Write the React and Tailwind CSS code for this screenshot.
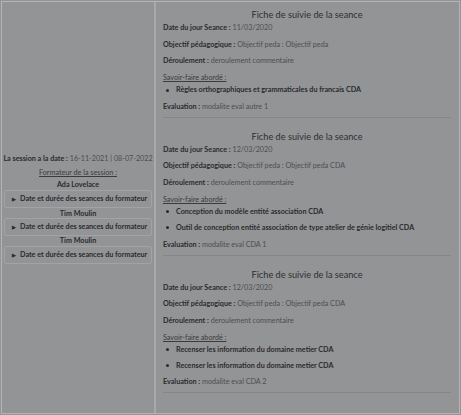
import React from "react";

const sections = [
  {
    date: "11/03/2020",
    obj: "Objectif peda : Objectif peda",
    skills: ["Règles orthographiques et grammaticales du francais CDA"],
    evalv: "modalite eval autre 1",
  },
  {
    date: "12/03/2020",
    obj: "Objectif peda : Objectif peda CDA",
    skills: [
      "Conception du modèle entité association CDA",
      "Outil de conception entité association de type atelier de génie logitiel CDA",
    ],
    evalv: "modalite eval CDA 1",
  },
  {
    date: "12/03/2020",
    obj: "Objectif peda : Objectif peda CDA",
    skills: [
      "Recenser les information du domaine metier CDA",
      "Recenser les information du domaine metier CDA",
    ],
    evalv: "modalite eval CDA 2",
  },
];

function Line({ label, value }) {
  return (
    <p className="leading-[10px] h-[10px] whitespace-nowrap">
      <span className="font-bold text-[#2a2b2d]">{label} :</span>{" "}
      <span className="text-[#4d4e50]">{value}</span>
    </p>
  );
}

function Section({ s }) {
  return (
    <div className="flex flex-col">
      <div className="text-center text-[9.2px] leading-[12px] h-[12px] text-[#2e2f31]">
        Fiche de suivie de la seance
      </div>
      <div className="mt-[2px] flex flex-col gap-[6.7px]">
        <Line label="Date du jour Seance" value={s.date} />
        <Line label="Objectif pédagogique" value={s.obj} />
        <Line label="Déroulement" value="deroulement commentaire" />
        <div className="flex flex-col">
          <p className="leading-[10px] h-[10px] underline text-[#3a3b3d]">Savoir-faire abordé :</p>
          <ul className="mt-[2px] flex flex-col gap-[6px] pl-[3px]">
            {s.skills.map((k, i) => (
              <li key={i} className="leading-[10px] h-[10px] font-bold text-[#2a2b2d] flex items-center gap-[7px] whitespace-nowrap">
                <span className="w-[3px] h-[3px] rounded-full bg-[#2a2b2d] inline-block" />
                {k}
              </li>
            ))}
          </ul>
        </div>
        <Line label="Evaluation" value={s.evalv} />
      </div>
      <div className="mt-[5px] h-px bg-[#858688]" />
    </div>
  );
}

function Details() {
  return (
    <div className="w-[148px] h-[18px] border border-[#a2a3a5] rounded-[2px] flex items-center pl-[7px] gap-[4px] font-bold text-[#2a2b2d] whitespace-nowrap">
      <span className="text-[5px] leading-none">▶</span>
      <span>Date et durée des seances du formateur</span>
    </div>
  );
}

export default function App() {
  return (
    <div
      className="w-[461px] h-[415px] bg-[#939496] pt-px pl-px text-[7.2px]"
      style={{ fontFamily: "Lato, 'Open Sans', sans-serif" }}
    >
      <div className="w-[459px] h-[413px] border border-[#b3b4b6] flex">
        <div className="w-[154px] border-r-2 border-[#a8a9ab] flex flex-col items-center justify-center pt-[3px]">
          <p className="leading-[10px] whitespace-nowrap">
            <span className="font-bold text-[#2a2b2d]">La session a la date :</span>{" "}
            <span className="text-[#4d4e50]">16-11-2021 | 08-07-2022</span>
          </p>
          <p className="mt-[4px] leading-[10px] underline text-[#3a3b3d]">Formateur de la session :</p>
          <p className="mt-[2px] leading-[10px] font-bold text-[#2a2b2d]">Ada Lovelace</p>
          <div className="mt-[0px]"><Details /></div>
          <p className="mt-[1px] leading-[10px] font-bold text-[#2a2b2d]">Tim Moulin</p>
          <div className="mt-[-1px]"><Details /></div>
          <p className="mt-[0px] leading-[10px] font-bold text-[#2a2b2d]">Tim Moulin</p>
          <div className="mt-[0px]"><Details /></div>
        </div>
        <div className="flex-1 pl-[7px] pr-[8px] pt-[7px] flex flex-col gap-[13px]">
          {sections.map((s, i) => (
            <Section key={i} s={s} />
          ))}
        </div>
      </div>
    </div>
  );
}
